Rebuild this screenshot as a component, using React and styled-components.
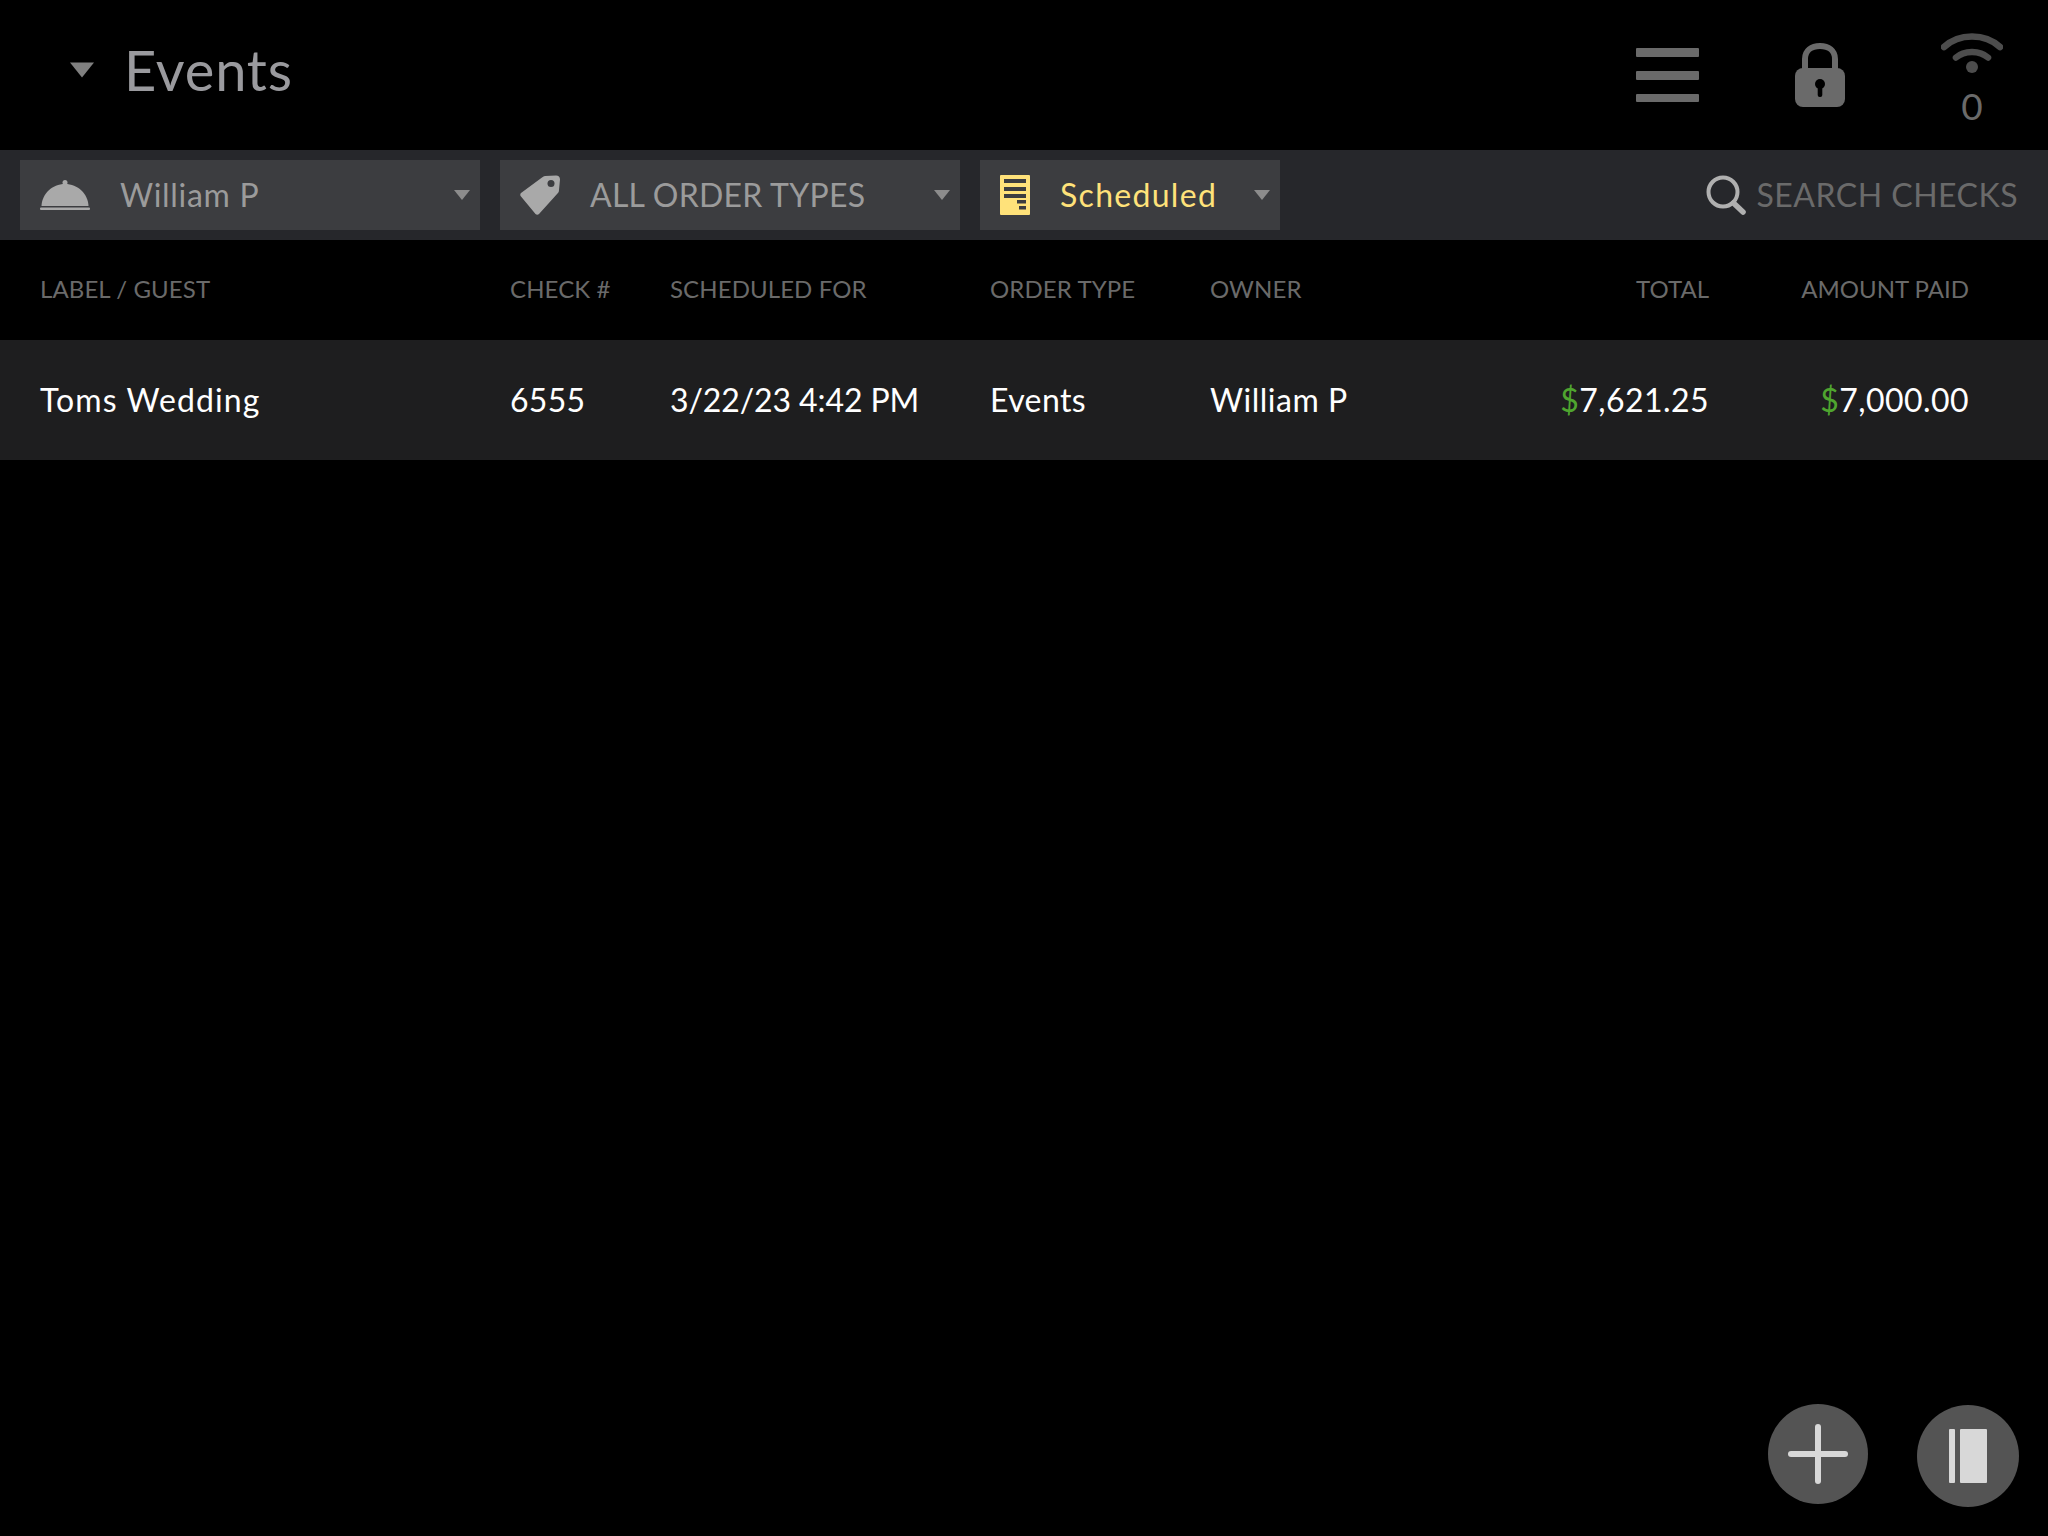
import styled, { createGlobalStyle } from "styled-components";

const GlobalStyle = createGlobalStyle`
  html, body {
    margin: 0;
    padding: 0;
    background: #000;
  }
  body {
    font-family: "Lato", "Open Sans", sans-serif;
  }
`;

const Page = styled.div`
  position: relative;
  height: 1536px;
  background: #000;
  overflow: hidden;
`;

const TopBar = styled.header`
  display: flex;
  align-items: center;
  justify-content: space-between;
  height: 150px;
  padding: 0 45px 0 70px;
  box-sizing: border-box;
`;

const TitleGroup = styled.div`
  display: flex;
  align-items: center;
  gap: 30px;
  margin-top: -10px;
`;

const Title = styled.h1`
  margin: 0;
  font-size: 56px;
  font-weight: 400;
  line-height: 64px;
  letter-spacing: 0.8px;
  color: #9a9a9e;
`;

const StatusIcons = styled.div`
  display: flex;
  align-items: center;
  gap: 96px;
`;

const Wifi = styled.div`
  display: flex;
  flex-direction: column;
  align-items: center;
  margin-top: 6px;
`;

const WifiCount = styled.span`
  font-size: 37px;
  line-height: 38px;
  margin-top: 14px;
  color: #6a6a6a;
`;

const FilterBar = styled.div`
  display: flex;
  align-items: center;
  gap: 20px;
  height: 90px;
  padding: 0 30px 0 20px;
  box-sizing: border-box;
  background: #26272b;
`;

const Select = styled.div`
  display: flex;
  align-items: center;
  gap: 30px;
  width: ${(p) => p.$width}px;
  height: 70px;
  padding: 0 10px 0 20px;
  box-sizing: border-box;
  background: #3c3d40;
`;

const SelectLabel = styled.span`
  flex: 1;
  padding-bottom: 2px;
  font-size: 32px;
  letter-spacing: ${(p) => p.$spacing}px;
  color: ${(p) => p.$color || "#9b9b9b"};
`;

const Search = styled.div`
  display: flex;
  align-items: center;
  gap: 10px;
  margin-left: auto;
  font-size: 32px;
  letter-spacing: 0.5px;
  color: #6a6a6a;
`;

const SearchText = styled.span`
  padding-bottom: 2px;
`;

const Columns = styled.div`
  display: grid;
  grid-template-columns: 470px 160px 320px 220px 300px 199px 260px;
  align-items: center;
  padding-left: 40px;
`;

const HeaderRow = styled(Columns)`
  height: 100px;
  padding-bottom: 3px;
  box-sizing: border-box;
  font-size: 24px;
  letter-spacing: 0.1px;
  color: #6a6a6a;
`;

const CheckRow = styled(Columns)`
  height: 120px;
  padding-bottom: 2px;
  box-sizing: border-box;
  font-size: 32px;
  color: #fff;
  background: #1e1e1f;
`;

const Cell = styled.div`
  letter-spacing: ${(p) => p.$spacing || 0}px;
`;

const Amount = styled.div`
  text-align: right;
  letter-spacing: ${(p) => p.$spacing || 0}px;
`;

const Dollar = styled.span`
  color: #4fa52f;
`;

const FloatingButton = styled.button`
  position: absolute;
  left: ${(p) => p.$left}px;
  top: ${(p) => p.$top}px;
  display: flex;
  align-items: center;
  justify-content: center;
  width: ${(p) => p.$size}px;
  height: ${(p) => p.$size}px;
  padding: 0;
  border: none;
  border-radius: 50%;
  background: #545454;
`;

function Caret({ width = 16, height = 10, color = "#8c8c8c" }) {
  return (
    <svg width={width} height={height} viewBox="0 0 16 10">
      <path d="M0 0H16L8 10Z" fill={color} />
    </svg>
  );
}

function MenuIcon() {
  return (
    <svg width="63" height="54" viewBox="0 0 63 54" fill="#6a6a6a">
      <rect y="0" width="63" height="9" rx="1" />
      <rect y="23" width="63" height="9" rx="1" />
      <rect y="46" width="63" height="8" rx="1" />
    </svg>
  );
}

function LockIcon() {
  return (
    <svg width="50" height="64" viewBox="0 0 50 64">
      <path
        d="M10 28V16C10 7.5 16.5 3 25 3S40 7.5 40 16V28"
        fill="none"
        stroke="#6a6a6a"
        strokeWidth="6"
      />
      <rect y="25" width="50" height="39" rx="8" fill="#6a6a6a" />
      <circle cx="25" cy="41" r="5" fill="#000" />
      <rect x="22.7" y="42" width="4.6" height="12" rx="2" fill="#000" />
    </svg>
  );
}

function WifiIcon() {
  return (
    <svg width="62" height="41" viewBox="0 0 62 41" fill="none">
      <path
        d="M3 15C18 1 44 1 59 15"
        stroke="#4d4d4d"
        strokeWidth="6.5"
        strokeLinecap="round"
      />
      <path
        d="M15 25.5C23 18 39 18 47 25.5"
        stroke="#4d4d4d"
        strokeWidth="6.5"
        strokeLinecap="round"
      />
      <circle cx="31" cy="35" r="6" fill="#4d4d4d" />
    </svg>
  );
}

function ClocheIcon() {
  return (
    <svg width="50" height="30" viewBox="0 0 50 30" fill="#a9a9a9">
      <circle cx="25" cy="2.5" r="2.5" />
      <path d="M1.5 26C2 14 12 4 25 4S48 14 48.500 26Z" />
      <rect y="27.500" width="50" height="2.500" rx="1" />
    </svg>
  );
}

function TagIcon() {
  return (
    <svg width="40" height="40" viewBox="0 0 40 40">
      <path
        d="M25 1L36 0.500C38.500 0.500 40 2 40 4.500L39 15C39 16.500 38.500 17.500 37.500 18.500L19 39C18 40 16.500 40 15.500 39L1 21.500C0 20.500 0 19 1 18L22 2.500C23 1.500 24 1 25 1Z"
        fill="#a9a9a9"
      />
      <circle cx="31" cy="8.500" r="3.500" fill="#3c3d40" />
    </svg>
  );
}

function ReceiptIcon() {
  return (
    <svg width="30" height="40" viewBox="0 0 30 40">
      <rect width="30" height="40" rx="1" fill="#ffe27a" />
      <g fill="#3c3d40">
        <rect x="4" y="4" width="22" height="4" />
        <rect x="4" y="12" width="22" height="4" />
        <rect x="4" y="19" width="22" height="4" />
        <rect x="17" y="25" width="9" height="3.500" />
        <rect x="19" y="31" width="7" height="3.500" />
      </g>
    </svg>
  );
}

function SearchIcon() {
  return (
    <svg width="40" height="40" viewBox="0 0 40 40" fill="none" stroke="#b0b0b0">
      <circle cx="17" cy="17" r="14.500" strokeWidth="4" />
      <path d="M27.500 28L37 37" strokeWidth="5.500" strokeLinecap="round" />
    </svg>
  );
}

function PlusIcon() {
  return (
    <svg width="60" height="60" viewBox="0 0 60 60" fill="#d8d8d8">
      <rect x="27" y="0" width="6" height="60" rx="3" />
      <rect x="0" y="27" width="60" height="6" rx="3" />
    </svg>
  );
}

function BookIcon() {
  return (
    <svg width="38" height="54" viewBox="0 0 38 54" fill="#d8d8d8">
      <rect x="0" y="0" width="6" height="54" rx="1" />
      <rect x="11" y="0" width="27" height="54" rx="1" />
    </svg>
  );
}

function Money({ value }) {
  return (
    <Amount $spacing={0.45}>
      <Dollar>$</Dollar>
      {value}
    </Amount>
  );
}

export default function App() {
  return (
    <Page>
      <GlobalStyle />
      <TopBar>
        <TitleGroup>
          <Caret width={24} height={16} color="#808080" />
          <Title>Events</Title>
        </TitleGroup>
        <StatusIcons>
          <MenuIcon />
          <LockIcon />
          <Wifi>
            <WifiIcon />
            <WifiCount>0</WifiCount>
          </Wifi>
        </StatusIcons>
      </TopBar>
      <FilterBar>
        <Select $width={460}>
          <ClocheIcon />
          <SelectLabel $spacing={0.7}>William P</SelectLabel>
          <Caret />
        </Select>
        <Select $width={460}>
          <TagIcon />
          <SelectLabel $spacing={0.26}>ALL ORDER TYPES</SelectLabel>
          <Caret />
        </Select>
        <Select $width={300}>
          <ReceiptIcon />
          <SelectLabel $spacing={1.3} $color="#ffe27a">
            Scheduled
          </SelectLabel>
          <Caret />
        </Select>
        <Search>
          <SearchIcon />
          <SearchText>SEARCH CHECKS</SearchText>
        </Search>
      </FilterBar>
      <HeaderRow>
        <div>LABEL / GUEST</div>
        <div>CHECK #</div>
        <div>SCHEDULED FOR</div>
        <div>ORDER TYPE</div>
        <div>OWNER</div>
        <Amount>TOTAL</Amount>
        <Amount>AMOUNT PAID</Amount>
      </HeaderRow>
      <CheckRow>
        <Cell $spacing={1.1}>Toms Wedding</Cell>
        <Cell $spacing={0.3}>6555</Cell>
        <Cell $spacing={-0.1}>3/22/23 4:42 PM</Cell>
        <Cell $spacing={0.4}>Events</Cell>
        <Cell $spacing={0.5}>William P</Cell>
        <Money value="7,621.25" />
        <Money value="7,000.00" />
      </CheckRow>
      <FloatingButton $left={1768} $top={1404} $size={100}>
        <PlusIcon />
      </FloatingButton>
      <FloatingButton $left={1917} $top={1405} $size={102}>
        <BookIcon />
      </FloatingButton>
    </Page>
  );
}
